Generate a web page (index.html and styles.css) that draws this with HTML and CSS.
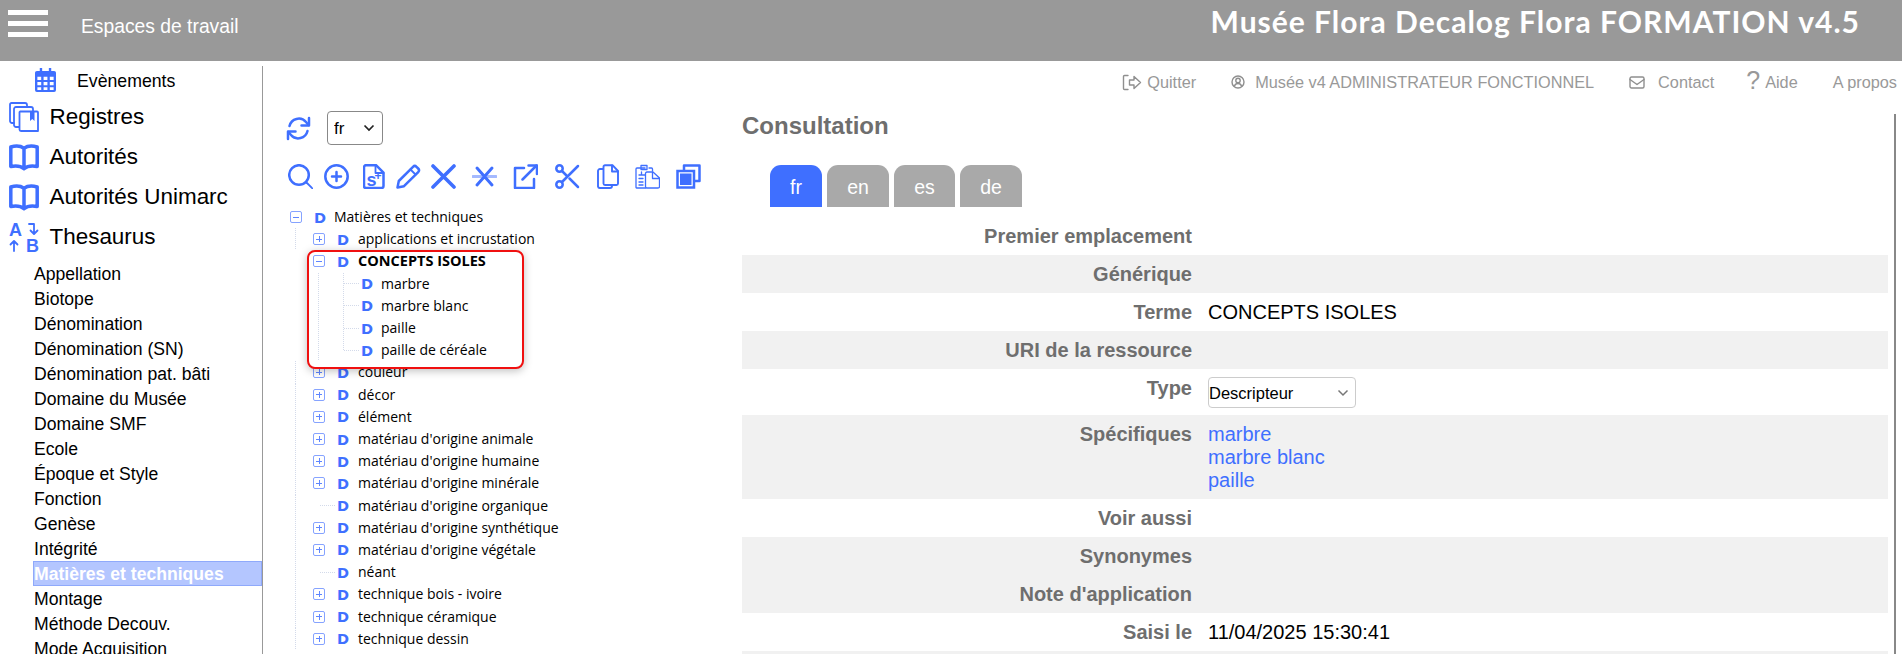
FILE: index.html
```html
<!DOCTYPE html>
<html lang="fr">
<head>
<meta charset="utf-8">
<title>Musée Flora</title>
<link rel="stylesheet" href="styles.css">
</head>
<body>
<header class="topbar">
  <div class="burger"><i></i><i></i><i></i></div>
  <div class="spaces">Espaces de travail</div>
  <div class="apptitle">Musée Flora Decalog Flora FORMATION v4.5</div>
</header>
<div class="page">
  <aside class="sidebar">
    <div class="event">
      <svg class="ev-ic" viewBox="0 0 22 25"><path class="fill" d="M5 0h2.500v3h7V0H17v3h3a2 2 0 0 1 2 2v18a2 2 0 0 1-2 2H2a2 2 0 0 1-2-2V5a2 2 0 0 1 2-2h3z"/><path class="cut" d="M2.500 9h4v3.500h-4zM9 9h4v3.500H9zM15.500 9h4v3.500h-4zM2.500 14.500h4V18h-4zM9 14.500h4V18H9zM15.500 14.500h4V18h-4zM2.500 20h4v3h-4zM9 20h4v3H9zM15.500 20h4v3h-4z"/></svg>
      <span>Evènements</span>
    </div>
    <div class="sec">
      <svg class="sec-ic" viewBox="0 0 30 30"><g class="ln thin"><path d="M5 21H3a2 2 0 0 1-2-2V2.500a1.500 1.500 0 0 1 1.500-1.500H16a2 2 0 0 1 2 2v1"/><path d="M10 25H7a2 2 0 0 1-2-2V7a2 2 0 0 1 2-2h15a2 2 0 0 1 2 2v2"/><path d="M11 9.500h17a1 1 0 0 1 1 1V29H12a1.500 1.500 0 0 1-1.500-1.500V10a1 1 0 0 1 .5-.5z"/></g><path class="fill" d="M21 10h4.500v9L23.300 17 21 19z"/></svg>
      <span>Registres</span>
    </div>
    <div class="sec">
      <svg class="sec-ic" viewBox="0 0 30 30"><use href="#book"/></svg>
      <span>Autorités</span>
    </div>
    <div class="sec">
      <svg class="sec-ic" viewBox="0 0 30 30"><use href="#book"/></svg>
      <span>Autorités Unimarc</span>
    </div>
    <div class="sec">
      <svg class="sec-ic" viewBox="0 0 30 30"><text class="az" x="0" y="14">A</text><text class="az" x="17" y="29.500">B</text><g class="ln thin"><path d="M20 2h5v9M21.500 8.500L25 12l3.500-3.500"/><path d="M5 29v-10M1.500 22.500L5 19l3.500 3.500"/></g></svg>
      <span>Thesaurus</span>
    </div>
    <ul class="menu">
      <li>Appellation</li>
      <li>Biotope</li>
      <li>Dénomination</li>
      <li>Dénomination (SN)</li>
      <li>Dénomination pat. bâti</li>
      <li>Domaine du Musée</li>
      <li>Domaine SMF</li>
      <li>Ecole</li>
      <li>Époque et Style</li>
      <li>Fonction</li>
      <li>Genèse</li>
      <li>Intégrité</li>
      <li class="on">Matières et techniques</li>
      <li>Montage</li>
      <li>Méthode Decouv.</li>
      <li>Mode Acquisition</li>
    </ul>
  </aside>
  <main class="main">
    <nav class="nav">
      <a class="nv q"><svg class="nv-q" viewBox="0 0 20 17"><g class="ln grey"><path d="M6 1.500H2.500a1 1 0 0 0-1 1v12a1 1 0 0 0 1 1H6"/><path d="M7.500 6h4.500V2.500L18.500 8.500 12 14.500V11H7.500z"/></g></svg><span>Quitter</span></a>
      <a class="nv u"><svg class="nv-u" viewBox="0 0 14 14"><g class="ln grey" ><circle cx="7" cy="7" r="6"/><circle cx="7" cy="5.500" r="2.200"/><path d="M3.500 11c.5-1.800 1.800-2.500 3.500-2.500s3 .7 3.500 2.500"/></g></svg><span>Musée v4 ADMINISTRATEUR FONCTIONNEL</span></a>
      <a class="nv m"><svg class="nv-m" viewBox="0 0 16 13"><g class="ln grey"><rect x="1" y="1" width="14" height="11" rx="1.500"/><path d="M1 3.500l7 5 7-5"/></g></svg><span>Contact</span></a>
      <a class="nv h"><span class="qm">?</span><span>Aide</span></a>
      <a class="nv"><span>A propos</span></a>
    </nav>
    <div class="content">
      <section class="treecol">
        <div class="langbar">
          <svg class="ic" viewBox="0 0 25 25"><g class="ln"><path d="M3.500 10A9.500 9.500 0 0 1 20 6l2.500 3"/><path d="M23 2v7.500h-7.500"/><path d="M21.500 15A9.500 9.500 0 0 1 5 19l-2.500-3"/><path d="M2 23v-7.500h7.500"/></g></svg>
          <select class="lang"><option>fr</option></select>
        </div>
        <div class="tools">
          <svg class="ic" viewBox="0 0 25 25"><g class="ln"><circle cx="11" cy="11" r="9.800"/><path class="thin" d="M18.500 18.500l6 6"/></g></svg>
          <svg class="ic" viewBox="0 0 25 25"><g class="ln"><circle cx="12.500" cy="12.500" r="11.200"/><path d="M12.500 8v9M8 12.500h9"/></g></svg>
          <svg class="ic" viewBox="0 0 25 25"><g class="ln"><path d="M3 1.200h10l7.500 7.500V22a2 2 0 0 1-2 2H3a2 2 0 0 1-2-2V3.200a2 2 0 0 1 2-2z"/><path class="thin" d="M12.500 1.500V9h8"/></g><text class="splus" x="3.500" y="21.500">s</text><text class="splus2" x="11.500" y="16">+</text></svg>
          <svg class="ic" viewBox="0 0 25 25"><g class="ln"><path d="M1.500 23.500l1.300-6.500L17 2.800a2.500 2.500 0 0 1 3.500 0l1.700 1.700a2.500 2.500 0 0 1 0 3.500L8 22.200z"/><path class="thin" d="M14.500 5.500l5 5"/></g></svg>
          <svg class="ic" viewBox="0 0 25 25"><path class="ln heavy" d="M2 2l21 21M23 2L2 23"/></svg>
          <svg class="ic" viewBox="0 0 25 25"><path class="ln pale" d="M1 12.500h23"/><path class="ln med" d="M5 4l15 17M20 4L5 21"/></svg>
          <svg class="ic" viewBox="0 0 25 25"><g class="ln"><path d="M11 4H2v20h19v-9"/><path d="M9.500 15.500L23.500 1.500"/><path d="M15.500 1.500h8.500V10"/></g></svg>
          <svg class="ic" viewBox="0 0 25 25"><g class="ln"><circle cx="4.500" cy="4.500" r="3.200"/><circle cx="4.500" cy="20.500" r="3.200"/><path d="M7 18L23 2"/><path d="M7 7l4.500 4.500M14.500 14.500L23 23"/></g></svg>
          <svg class="ic" viewBox="0 0 25 25"><g class="ln thinner"><path d="M8 1.200h7.500L21 7v12.500a1.500 1.500 0 0 1-1.500 1.500H8a1.500 1.500 0 0 1-1.500-1.500V2.700A1.500 1.500 0 0 1 8 1.200z"/><path d="M15 1.500V7.500h6"/><path d="M6 5H3a2 2 0 0 0-2 2v15.500A1.800 1.800 0 0 0 2.800 24H13a2 2 0 0 0 2-2v-1"/></g></svg>
          <svg class="ic" viewBox="0 0 25 25"><g class="ln hair"><path d="M10 4H2a1 1 0 0 0-1 1v18.500a.5.500 0 0 0 .5.500H11"/><path d="M14 4h2.500a1 1 0 0 1 1 1v2"/><path d="M6 1.500h6v4H6zM4 11h6M4 14.500h4M4 18h4M4 21h4M6.500 8v3"/><path d="M12 8h6l6.500 6v8.500a1.500 1.500 0 0 1-1.500 1.500H12a1.500 1.500 0 0 1-1.500-1.500V9.500A1.500 1.500 0 0 1 12 8z"/><path d="M17.500 8.500V14.500h6.500"/></g></svg>
          <svg class="ic" viewBox="0 0 25 25"><path class="ln" d="M8 6V1.500h15.500V17H19"/><rect class="ln whitebg" x="1.500" y="7" width="16.500" height="16.500"/><rect class="fill" x="4" y="9.500" width="11.500" height="11.500"/></svg>
        </div>
        <div class="tree">
          <div class="row l0"><span class="exp minus"></span><b class="d">D</b><span>Matières et techniques</span></div>
          <div class="row l1"><span class="exp plus"></span><b class="d">D</b><span>applications et incrustation</span></div>
          <div class="hl">
            <div class="row l1 first"><span class="exp minus"></span><b class="d">D</b><strong>CONCEPTS ISOLES</strong></div>
            <div class="row l2"><b class="d">D</b><span>marbre</span></div>
            <div class="row l2"><b class="d">D</b><span>marbre blanc</span></div>
            <div class="row l2"><b class="d">D</b><span>paille</span></div>
            <div class="row l2 end"><b class="d">D</b><span>paille de céréale</span></div>
          </div>
          <div class="row l1"><span class="exp plus"></span><b class="d">D</b><span>couleur</span></div>
          <div class="row l1"><span class="exp plus"></span><b class="d">D</b><span>décor</span></div>
          <div class="row l1"><span class="exp plus"></span><b class="d">D</b><span>élément</span></div>
          <div class="row l1"><span class="exp plus"></span><b class="d">D</b><span>matériau d'origine animale</span></div>
          <div class="row l1"><span class="exp plus"></span><b class="d">D</b><span>matériau d'origine humaine</span></div>
          <div class="row l1"><span class="exp plus"></span><b class="d">D</b><span>matériau d'origine minérale</span></div>
          <div class="row l1 leaf"><span class="exp none"></span><b class="d">D</b><span>matériau d'origine organique</span></div>
          <div class="row l1"><span class="exp plus"></span><b class="d">D</b><span>matériau d'origine synthétique</span></div>
          <div class="row l1"><span class="exp plus"></span><b class="d">D</b><span>matériau d'origine végétale</span></div>
          <div class="row l1 leaf"><span class="exp none"></span><b class="d">D</b><span>néant</span></div>
          <div class="row l1"><span class="exp plus"></span><b class="d">D</b><span>technique bois - ivoire</span></div>
          <div class="row l1"><span class="exp plus"></span><b class="d">D</b><span>technique céramique</span></div>
          <div class="row l1"><span class="exp plus"></span><b class="d">D</b><span>technique dessin</span></div>
        </div>
      </section>
      <section class="consult">
        <h1 class="ctitle">Consultation</h1>
        <div class="tabs">
          <span class="tab active">fr</span>
          <span class="tab">en</span>
          <span class="tab narrow">es</span>
          <span class="tab">de</span>
        </div>
        <dl class="table">
          <div class="tr"><dt>Premier emplacement</dt><dd></dd></div>
          <div class="tr alt"><dt>Générique</dt><dd></dd></div>
          <div class="tr"><dt>Terme</dt><dd>CONCEPTS ISOLES</dd></div>
          <div class="tr alt"><dt>URI de la ressource</dt><dd></dd></div>
          <div class="tr typerow"><dt>Type</dt><dd><select class="type"><option>Descripteur</option></select></dd></div>
          <div class="tr alt links"><dt>Spécifiques</dt><dd><a>marbre</a><a>marbre blanc</a><a>paille</a></dd></div>
          <div class="tr"><dt>Voir aussi</dt><dd></dd></div>
          <div class="tr alt"><dt>Synonymes</dt><dd></dd></div>
          <div class="tr alt"><dt>Note d'application</dt><dd></dd></div>
          <div class="tr"><dt>Saisi le</dt><dd>11/04/2025 15:30:41</dd></div>
          <div class="tr alt"><dt></dt><dd></dd></div>
        </dl>
      </section>
      <div class="scrollline"></div>
    </div>
  </main>
</div>
<svg class="defs" width="0" height="0"><symbol id="book" viewBox="0 0 30 30"><path d="M1.800 5c5-1.500 10-1 13.200 1.200C18.200 4 23.200 3.500 28.200 5v19.500c-5-1-10-.5-13.200 2.300-3.200-2.800-8.200-3.300-13.200-2.300zM15 6.500V26.500" fill="none" stroke="#3f6fff" stroke-width="3.500" stroke-linejoin="round"/></symbol></svg>
</body>
</html>
```
FILE: styles.css
```css
* { box-sizing: border-box; }
html, body { margin: 0; height: 654px; overflow: hidden; background: #fff; }
body { font-family: "Liberation Sans", Arial, sans-serif; color: #000; }
.defs { display: block; height: 0; }

.topbar { height: 61px; background: #999; display: flex; color: #fff; padding: 10px 42px 0 8px; }
.burger { width: 40px; height: 27px; display: flex; flex-direction: column; justify-content: space-between; }
.burger i { display: block; height: 5px; background: #fff; }
.spaces { margin: 6px 0 0 33px; font-size: 19.300px; line-height: 22px; }
.apptitle { margin-left: auto; margin-top: -1px; font-family: Lato, sans-serif; font-weight: 700; font-size: 30px; letter-spacing: 1px; line-height: 24px; }

.page { display: flex; height: 593px; }
.sidebar { width: 263px; flex: none; margin-top: 5px; border-right: 1px solid #999; overflow: hidden; }
.event { height: 28px; display: flex; align-items: center; padding-left: 35px; font-size: 17.700px; margin-bottom: 3px; }
.event span { margin-top: 2px; margin-left: -1px; }
.ev-ic { width: 21px; height: 24px; margin-right: 22px; }
.sec { height: 40px; display: flex; align-items: center; padding-left: 9px; font-size: 22.450px; }
.sec-ic { width: 30px; height: 30px; margin-right: 10.500px; flex: none; }
.az { font: 700 18px "Liberation Sans", sans-serif; fill: #3f6fff; }
.menu { list-style: none; margin: 4px 0 0; padding: 0 0 0 33px; font-size: 17.600px; }
.menu li { height: 25px; line-height: 26px; padding-left: 1px; white-space: nowrap; }
.menu .on { background: #b4c6ff; outline: 1px solid #8fa9fb; outline-offset: -1px; color: #fff; font-weight: 700; }

.fill { fill: #3f6fff; }
.cut { fill: #fff; }
.ln { fill: none; stroke: #3f6fff; stroke-width: 2.500px; stroke-linejoin: round; stroke-linecap: round; }
.thin { stroke-width: 1.800px; }
.thinner { stroke-width: 1.900px; }
.hair { stroke-width: 1.300px; }
.heavy { stroke-width: 3.600px; }
.med { stroke-width: 3px; }
.pale { stroke: #a5baff; stroke-width: 3px; }
.grey { stroke: #8f8f8f; stroke-width: 1.400px; }
.whitebg { fill: #fff; stroke-linejoin: miter; }
.splus { font: 700 18px "Liberation Sans", sans-serif; fill: #3f6fff; }
.splus2 { font: 700 12px "Liberation Sans", sans-serif; fill: #3f6fff; }

.main { flex: 1; min-width: 0; }
.nav { height: 32px; margin-top: 5px; display: flex; justify-content: flex-end; align-items: center; gap: 35px; padding-right: 5px; font-size: 16.300px; color: #999; }
.nv { display: flex; align-items: center; }
.nv.h { margin-left: -3px; }
.nv-q { width: 20px; height: 17px; margin-right: 5px; }
.nv-u { width: 14px; height: 14px; margin-right: 10px; }
.nv-m { width: 16px; height: 13px; margin-right: 13px; }
.qm { font-size: 25px; margin-right: 5px; line-height: 22px; margin-top: -4px; }

.content { display: flex; margin-top: 2px; }
.treecol { width: 479px; flex: none; padding: 11px 0 0 23px; }
.langbar { display: flex; align-items: center; gap: 16px; height: 34px; }
.ic { width: 25px; height: 25px; display: block; }
.lang { width: 56px; height: 34px; border: 1px solid #888; border-radius: 4px; font: 17px "Liberation Sans", sans-serif; padding: 0 0 0 6px; color: #000; appearance: none; background: #fff url("data:image/svg+xml,%3Csvg xmlns='http://www.w3.org/2000/svg' width='12' height='8'%3E%3Cpath d='M1.500 1.500L6 6l4.500-4.500' fill='none' stroke='%23222' stroke-width='1.700'/%3E%3C/svg%3E") no-repeat right 7px center; }
.tools { display: grid; grid-template-columns: 36px 39px 33px 35px 41px 41px 42px 42px 38px 41px 25px; margin-top: 19px; height: 25px; padding-left: 2px; }

.tree { margin-top: 17px; font-family: "Open Sans", sans-serif; font-size: 14px; --o: 0px; --dot: repeating-linear-gradient(to bottom, #d3daea 0 1px, transparent 1px 2px); --dash: repeating-linear-gradient(to right, #d3daea 0 1px, transparent 1px 2px); }
.row { height: 22.200px; display: flex; align-items: center; white-space: nowrap; background-repeat: no-repeat; }
.row > span:last-child, .row > strong { margin-top: -1px; }
.row strong { font-weight: 700; font-size: 14.500px; }
.l0 { padding-left: 4px; }
.l1 { padding-left: 27px; background-image: var(--dot); background-size: 1px 100%; background-position: calc(9px - var(--o)) 0; }
.l0 .d { margin-right: 10px; }
.l2 { padding-left: 76px; background-image: var(--dot), var(--dot), var(--dash); background-size: 1px 100%, 1px 100%, 16px 1px; background-position: calc(32px - var(--o)) 0, calc(57px - var(--o)) 0, calc(58px - var(--o)) 50%; }
.l2.end { background-size: 1px 100%, 1px 50%, 16px 1px; }
.leaf { background-image: var(--dot), var(--dash); background-size: 1px 100%, 16px 1px; background-position: 9px 0, 34px 50%; background-repeat: no-repeat; }
.exp { width: 12px; height: 12px; flex: none; margin-right: 13px; border: 1px solid #86a3ff; border-radius: 2px; background-color: #fff; background-repeat: no-repeat; background-position: center; }
.minus { background-image: linear-gradient(#5f86ff, #5f86ff); background-size: 6px 1px; }
.plus { background-image: linear-gradient(#5f86ff, #5f86ff), linear-gradient(#5f86ff, #5f86ff); background-size: 6px 1px, 1px 6px; }
.none { border-color: transparent; background-color: transparent; }
.d { width: 10px; flex: none; margin: 1px 11px 0 -1px; color: #3f6fff; font: 700 14.500px "DejaVu Sans", sans-serif; line-height: 14px; }
.l2 .d { margin-right: 10px; }
.hl { --o: 23px; position: relative; z-index: 1; width: 217px; height: 119px; margin: 0 0 -8px 21px; border: 2px solid #f01010; border-radius: 8px; background: #fff; box-shadow: 0 2px 8px rgba(0, 0, 0, .25); }
.hl .l1 { padding-left: 4px; }
.hl .l2 { padding-left: 53px; }
.hl .first { margin-top: -2px; }

.consult { width: 1146px; flex: none; padding-top: 11px; }
.ctitle { margin: 0; font-size: 24px; line-height: 30px; color: #6e6e6e; font-weight: 700; }
.tabs { display: flex; gap: 5px; margin: 24px 0 10px; padding-left: 28px; height: 42px; }
.tab { height: 42px; width: 62px; background: #a9a9a9; color: #fff; border-radius: 11px 11px 0 0; font-size: 19.500px; line-height: 44px; text-align: center; }
.tab.active { width: 52px; background: #3f6fff; }
.tab.narrow { width: 61px; }
.table { margin: 0; }
.tr { display: grid; grid-template-columns: 450px 1fr; column-gap: 16px; min-height: 38px; padding-top: 7.500px; line-height: 23px; font-size: 20px; }
.tr.alt { background: #f1f1f1; }
.tr dt { text-align: right; font-weight: 700; color: #6e6e6e; }
.tr dd { margin: 0; }
.typerow { height: 46px; }
.links { padding-bottom: 7.500px; }
.links a { display: block; color: #3f6fff; }
.type { display: block; margin-top: .500px; width: 148px; height: 31px; border: 1px solid #ccc; border-radius: 4px; font: 16.500px "Liberation Sans", sans-serif; padding: 0; color: #000; appearance: none; background: #fff url("data:image/svg+xml,%3Csvg xmlns='http://www.w3.org/2000/svg' width='12' height='8'%3E%3Cpath d='M1.500 1.500L6 6l4.500-4.500' fill='none' stroke='%23777' stroke-width='1.500'/%3E%3C/svg%3E") no-repeat right 6px center; }
.scrollline { width: 2px; margin: 14px 0 0 6px; background: #888; height: 540px; flex: none; }
```
